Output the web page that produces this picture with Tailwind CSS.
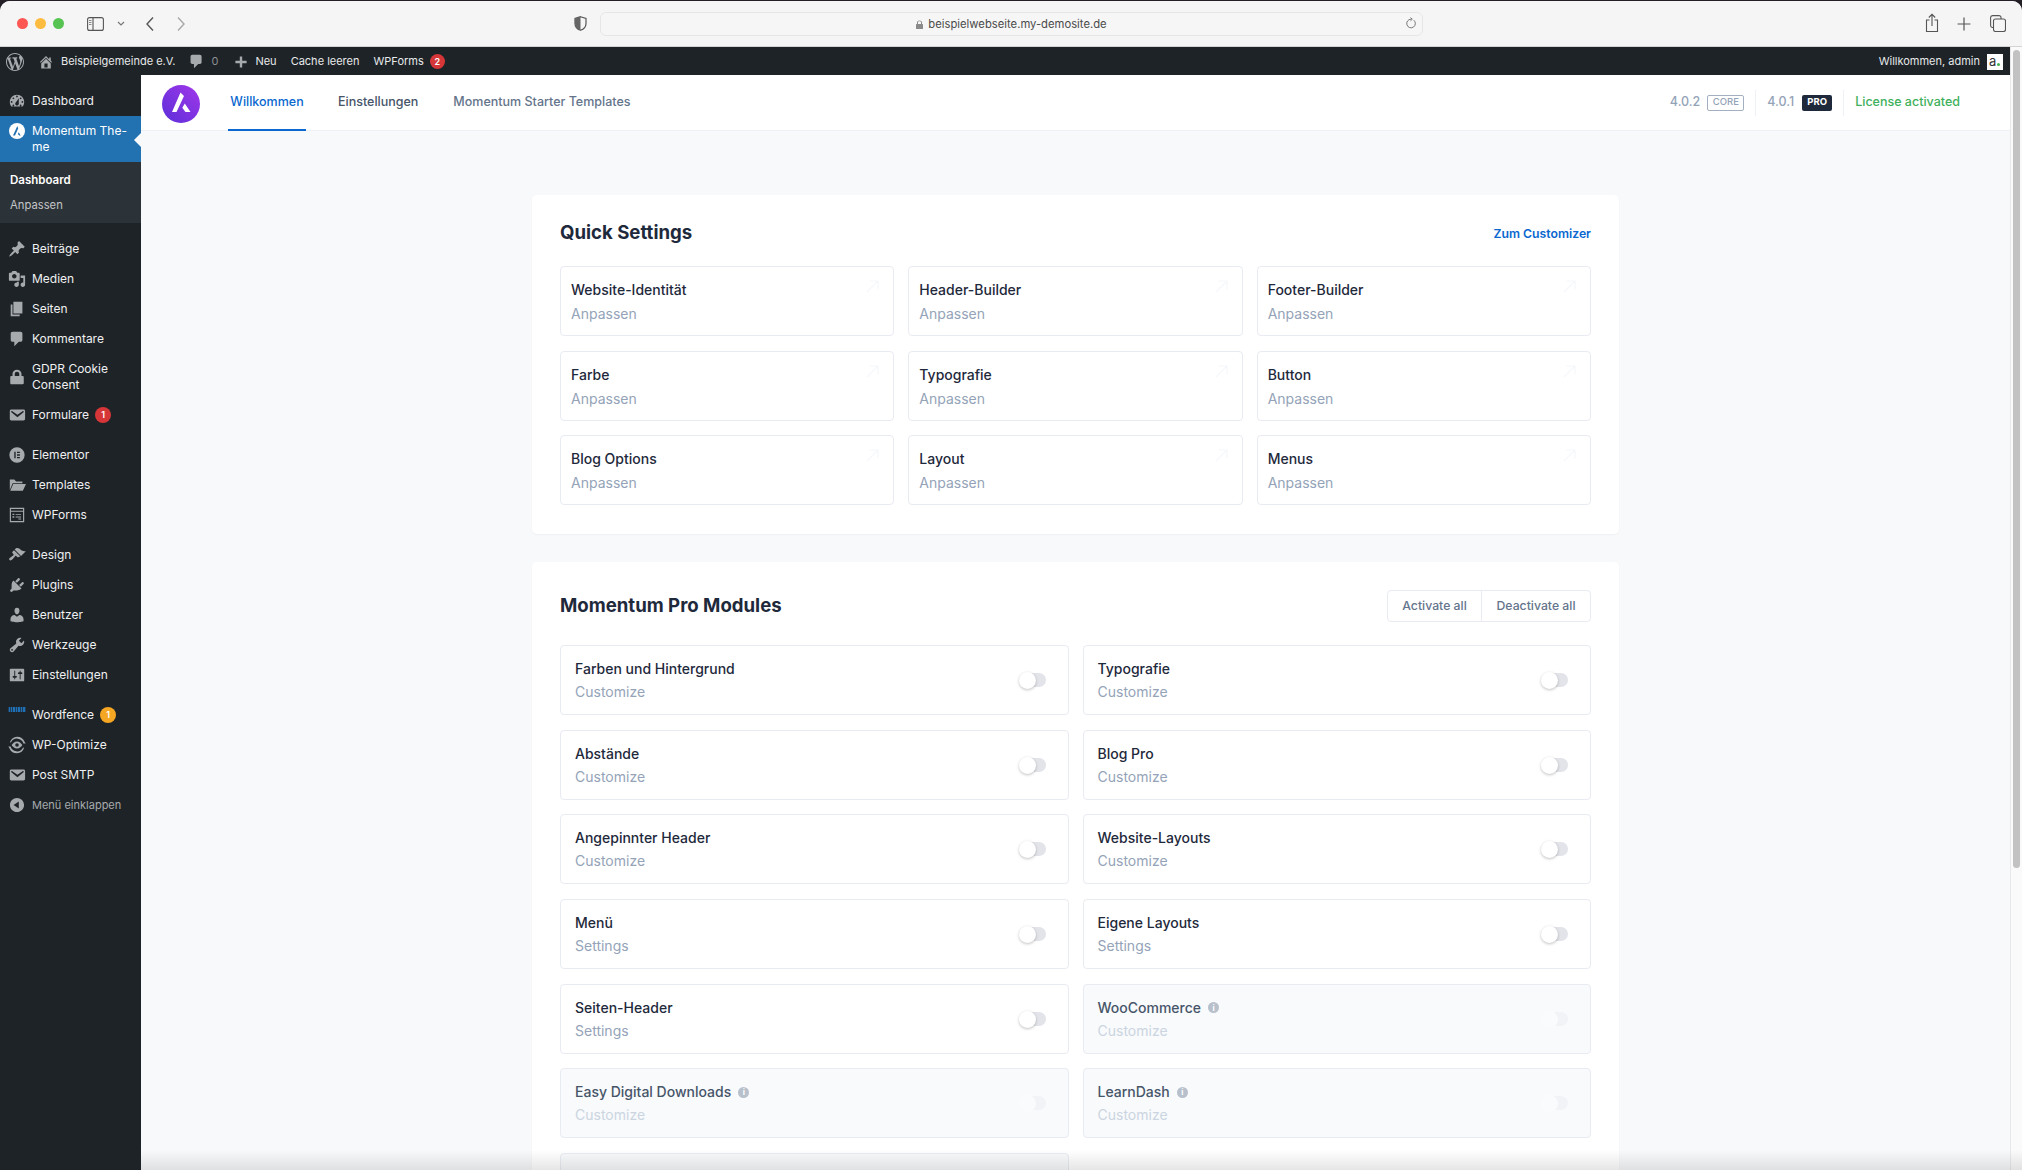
<!DOCTYPE html>
<html lang="de">
<head>
  <meta charset="UTF-8">
  <title>Momentum Theme - Beispielgemeinde e.V.</title>
  <script src="https://cdn.jsdelivr.net/npm/@tailwindcss/browser@4"></script>
</head>
<body class="bg-[#241f26] h-screen overflow-hidden font-['Inter',sans-serif] pt-px">
<div class="relative h-[1169px] flex flex-col rounded-t-[10px] overflow-hidden bg-[#f8f9fb]">

  <!-- Browser-Leiste -->
  <div class="h-[46px] shrink-0 bg-[#f5f5f5] border-b border-[#d4d4d4] flex items-center relative">
    <div class="flex items-center gap-[7px] pl-[17px]">
      <span class="w-[11px] h-[11px] rounded-full bg-[#fc5753]"></span>
      <span class="w-[11px] h-[11px] rounded-full bg-[#fdbc40]"></span>
      <span class="w-[11px] h-[11px] rounded-full bg-[#57c353]"></span>
    </div>
    <svg class="ml-[23px]" width="17" height="14" viewBox="0 0 17 14" fill="none" stroke="#555" stroke-width="1.1"><rect x="0.6" y="0.6" width="15.8" height="12.8" rx="2"/><path d="M6 1v12"/><path d="M2 3.5h2.5M2 5.5h2.5M2 7.5h2.5" stroke="#888"/></svg>
    <svg class="ml-[13px]" width="8" height="6" viewBox="0 0 8 6" fill="none" stroke="#777" stroke-width="1.2"><path d="M1 1l3 3 3-3"/></svg>
    <svg class="ml-[20px]" width="10" height="16" viewBox="0 0 10 16" fill="none" stroke="#555" stroke-width="1.4"><path d="M8 1.5L2 8l6 6.5"/></svg>
    <svg class="ml-[21px]" width="10" height="16" viewBox="0 0 10 16" fill="none" stroke="#a8a8a8" stroke-width="1.4"><path d="M2 1.5L8 8l-6 6.5"/></svg>
    <svg class="ml-[388px]" width="13" height="15" viewBox="0 0 13 15"><path d="M6.5.7L12 2.4v5c0 3.4-2.4 5.7-5.5 6.9C3.4 13.100 1 10.800 1 7.400v-5z" fill="none" stroke="#555" stroke-width="1.2"/><path d="M6.500.7V14.300C3.400 13.100 1 10.800 1 7.400v-5z" fill="#666"/></svg>
    <div class="ml-[13px] w-[823px] h-[24px] rounded-[6px] border border-[#e6e6e6] bg-[#f6f6f6] flex items-center justify-center relative text-[11.25px] text-[#4a4a4a] pt-px">
      <svg class="mr-[5px]" width="7" height="9" viewBox="0 0 7 9" fill="#8a8a8a"><path d="M1 4V2.600C1 1.300 2.100.4 3.500.4S6 1.300 6 2.600V4h.4c.3 0 .6.300.6.600v3.800c0 .3-.3.600-.6.600H.6C.3 9 0 8.700 0 8.400V4.600C0 4.300.3 4 .6 4zm1 0h3V2.600C5 1.800 4.400 1.300 3.500 1.300S2 1.800 2 2.600z"/></svg>
      <span>beispielwebseite.my-demosite.de</span>
      <svg class="absolute right-[5px] top-[4px]" width="12" height="13" viewBox="0 0 12 13" fill="none" stroke="#777" stroke-width="1"><path d="M8.800 3.200A4.300 4.300 0 1 1 6 2.200"/><path d="M5.500.6L7.300 2.200 5.500 3.800"/></svg>
    </div>
    <svg class="absolute left-[1925px] top-[12px]" width="14" height="20" viewBox="0 0 14 20" fill="none" stroke="#555" stroke-width="1.1"><path d="M4.500 7H1.500v11.500h11V7h-3"/><path d="M7 13V1.500M3.800 4.500L7 1.300l3.200 3.200"/></svg>
    <svg class="absolute left-[1957px] top-[16px]" width="14" height="14" viewBox="0 0 14 14" stroke="#555" stroke-width="1.2"><path d="M7 .6v12.800M.6 7h12.800"/></svg>
    <svg class="absolute left-[1990px] top-[14px]" width="16" height="17" viewBox="0 0 16 17" fill="none" stroke="#555" stroke-width="1.1"><rect x="3.500" y="4" width="12" height="12.500" rx="2"/><path d="M3 12.500H2.500A2 2 0 0 1 .6 10.500V2.600A2 2 0 0 1 2.500.6h6.500a2 2 0 0 1 2 2V4"/></svg>
  </div>

  <div class="flex-1 flex min-h-0">
    <div class="flex-1 flex flex-col min-w-0">

      <!-- Admin-Leiste -->
      <div class="h-[28px] shrink-0 bg-[#1d2327] flex items-center text-[11px] text-[#e8e9ea] pt-px">
        <svg class="ml-[6px]" width="18" height="18" viewBox="0 0 20 20" fill="#a7aaad"><path d="M20 10c0-5.510-4.490-10-10-10C4.480 0 0 4.490 0 10c0 5.520 4.480 10 10 10 5.510 0 10-4.480 10-10zM7.780 15.370L4.370 6.220c.55-.02 1.170-.08 1.170-.08.5-.06.44-1.130-.06-1.110 0 0-1.450.11-2.370.11-.18 0-.37 0-.58-.01C4.120 2.690 6.870 1.110 10 1.110c2.330 0 4.450.87 6.050 2.340-.68-.11-1.650.39-1.650 1.580 0 .74.45 1.360.9 2.100.35.61.55 1.360.55 2.460 0 1.490-1.400 5-1.400 5l-3.030-8.370c.54-.02.82-.17.82-.17.5-.05.44-1.250-.06-1.220 0 0-1.440.12-2.380.12-.87 0-2.330-.12-2.330-.12-.5-.03-.56 1.200-.06 1.220l.92.08 1.260 3.410zM17.410 10c.24-.64.74-1.870.43-4.250.7 1.290 1.050 2.710 1.050 4.250 0 3.290-1.730 6.240-4.400 7.780.97-2.590 1.940-5.200 2.920-7.780zM6.100 18.090C3.120 16.650 1.110 13.530 1.110 10c0-1.300.23-2.480.72-3.590C3.250 10.300 4.670 14.200 6.100 18.090zm4.030-6.630l2.580 6.980c-.86.29-1.760.45-2.710.45-.79 0-1.570-.11-2.290-.33.81-2.380 1.620-4.740 2.420-7.100z"/></svg>
        <svg class="ml-[14px]" width="16" height="16" viewBox="0 0 20 20" fill="#a7aaad"><path d="M16 8.500l1.530 1.530-1.060 1.060L10 4.620l-6.470 6.470-1.060-1.060L10 2.500l4 4v-2h2v4zm-6-2.460l6 5.990V18H4v-5.970zM12 17v-5H8v5h4z"/></svg>
        <span class="ml-[7px]">Beispielgemeinde e.V.</span>
        <svg class="ml-[13px]" width="17" height="17" viewBox="0 0 20 20" fill="#a7aaad"><path d="M5 2h9c1.100 0 2 .9 2 2v7c0 1.100-.9 2-2 2h-2l-5 5v-5H5c-1.100 0-2-.9-2-2V4c0-1.100.9-2 2-2z"/></svg>
        <span class="ml-[6px] text-[#8c8f94]">0</span>
        <svg class="ml-[15px]" width="16" height="16" viewBox="0 0 20 20" fill="#a7aaad"><path d="M17 8.500v3h-5.500V17h-3v-5.500H3v-3h5.500V3h3v5.500z"/></svg>
        <span class="ml-[6px]">Neu</span>
        <span class="ml-[14px]">Cache leeren</span>
        <span class="ml-[14px]">WPForms</span>
        <span class="ml-[6px] w-[15px] h-[15px] rounded-full bg-[#d63638] text-white text-[9px] font-semibold flex items-center justify-center">2</span>
        <span class="ml-auto">Willkommen, admin</span>
        <span class="ml-[7px] mr-[7px] w-[16px] h-[16px] bg-white text-[#333] text-[13px] leading-[15px] flex items-baseline pl-[2px]">a<i class="w-[3px] h-[3px] rounded-full bg-[#46b450] ml-[1px]"></i></span>
      </div>

      <div class="flex-1 flex min-h-0">

        <!-- Seitenleiste -->
        <aside class="w-[141px] shrink-0 bg-[#1d2327] text-[12px] text-[#f0f0f1] pt-[11px]">
          <div id="menu-top"></div>
          <div class="relative h-[46px] bg-[#2271b1] text-white flex">
            <span class="w-[32px] flex justify-center pt-[7px] pl-px">
              <svg width="16" height="16" viewBox="0 0 16 16"><circle cx="8" cy="8" r="8" fill="#fff"/><path d="M8.300 3L4 12.500h2L9.200 5.500zM9.700 9.200l2 3.300H10.200L8.900 11z" fill="#2271b1"/></svg>
            </span>
            <span class="leading-[16px] pt-[7px] w-[104px]">Momentum The-<br>me</span>
            <i class="absolute right-0 top-[17px] w-0 h-0 border-y-[7px] border-y-transparent border-r-[7px] border-r-[#f8f9fb]"></i>
          </div>
          <div class="h-[61px] bg-[#2c3338] pl-[10px] pt-[9px]">
            <div class="h-[25px] leading-[18px] font-semibold text-white text-[11.5px]">Dashboard</div>
            <div class="leading-[18px] text-[#c3c4c7] text-[11.25px]">Anpassen</div>
          </div>
          <div id="menu-main" class="pt-[11px]"></div>
        </aside>

        <!-- Inhalt -->
        <main class="flex-1 min-w-0 overflow-hidden">
          <header class="h-[56px] bg-white border-b border-[#eef1f5] flex items-stretch pl-[21px] pr-[50px] text-[12.5px]">
            <svg class="mt-[10px]" width="38" height="38" viewBox="0 0 38 38"><defs><linearGradient id="lg" x1="0" y1="1" x2="1" y2="0"><stop offset="0" stop-color="#5b2fd8"/><stop offset="1" stop-color="#a137ea"/></linearGradient></defs><circle cx="19" cy="19" r="19" fill="url(#lg)"/><path d="M18.500 7.500L10 27h4.500L22 11zM22.800 18.500L28.500 27h-5l-3.200-4.300z" fill="#fff"/></svg>
            <nav class="flex ml-[28px] font-medium">
              <a class="w-[78px] text-center pt-[18px] text-[#0a68d0] border-b-2 border-[#0a68d0] -mb-px">Willkommen</a>
              <a class="ml-[32px] pt-[18px] text-[#475569]">Einstellungen</a>
              <a class="ml-[35px] pt-[18px] text-[#64748b]">Momentum Starter Templates</a>
            </nav>
            <div class="ml-auto flex items-center font-medium">
              <span class="text-[#94a3b8]">4.0.2</span>
              <span class="ml-[7px] w-[37px] h-[16px] rounded-[2px] border border-[#a3b0c2] text-[#94a3b8] text-[9.5px] flex items-center justify-center">CORE</span>
              <i class="ml-[11px] w-px h-[26px] bg-[#eef1f5]"></i>
              <span class="ml-[11px] text-[#94a3b8]">4.0.1</span>
              <span class="ml-[8px] w-[30px] h-[16px] rounded-[2px] bg-[#1e293b] text-white text-[9.5px] font-bold flex items-center justify-center">PRO</span>
              <i class="ml-[11px] w-px h-[26px] bg-[#eef1f5]"></i>
              <span class="ml-[11px] text-[#3eb05c]">License activated</span>
            </div>
          </header>

          <div class="w-[1087px] mx-auto pt-[64px]">
            <section class="h-[339px] bg-white rounded-[5px] shadow-[0_1px_2px_rgba(15,23,42,0.04)] px-[28px] pt-[24px]">
              <div class="flex items-center justify-between h-[28px]">
                <h2 class="text-[18.6px] font-bold text-[#1e293b]">Quick Settings</h2>
                <a class="text-[12.25px] font-semibold text-[#0a68d0] pt-[2px]">Zum Customizer</a>
              </div>
              <div id="quick" class="mt-[19px] grid grid-cols-3 gap-x-[14px] gap-y-[14.670px]"></div>
            </section>

            <section class="mt-[28px] bg-white rounded-[5px] shadow-[0_1px_2px_rgba(15,23,42,0.04)] px-[28px] pt-[28px] pb-[40px]">
              <div class="flex items-center justify-between h-[32px]">
                <h2 class="text-[18.6px] font-bold text-[#1e293b]">Momentum Pro Modules</h2>
                <div class="flex h-[32px] rounded-[4px] border border-[#e8ebf1] text-[12.25px] font-medium text-[#64748b]">
                  <span class="w-[94px] flex items-center justify-center border-r border-[#e8ebf1]">Activate all</span>
                  <span class="w-[108px] flex items-center justify-center">Deactivate all</span>
                </div>
              </div>
              <div id="modules" class="mt-[23px] grid grid-cols-2 gap-x-[14px] gap-y-[14.670px]"></div>
            </section>
          </div>
        </main>
      </div>
    </div>

    <!-- Scrollbalken -->
    <div class="w-[12px] shrink-0 bg-[#fafafa] border-l border-[#e8e8e8] pt-[3px] pl-[2px]">
      <div class="w-[7px] h-[818px] rounded-full bg-[#c2c2c2]"></div>
    </div>
  </div>

  <!-- Fensterschatten unten -->
  <div class="pointer-events-none absolute left-[141px] right-0 bottom-0 h-[20px] bg-gradient-to-b from-transparent to-black/10"></div>
</div>

<script>
  const icons = {
    dashboard: 'M3.760 16h12.480c1.100-1.370 1.760-3.110 1.760-5 0-4.420-3.580-8-8-8s-8 3.580-8 8c0 1.890.66 3.630 1.760 5zM10 4c.55 0 1 .45 1 1s-.45 1-1 1-1-.45-1-1 .45-1 1-1zM6 6c.55 0 1 .45 1 1s-.45 1-1 1-1-.45-1-1 .45-1 1-1zm8 0c.55 0 1 .45 1 1s-.45 1-1 1-1-.45-1-1 .45-1 1-1zm-5.370 5.550L12 7v6c0 1.100-.9 2-2 2s-2-.9-2-2c0-.57.24-1.080.63-1.450zM4 10c.55 0 1 .45 1 1s-.45 1-1 1-1-.45-1-1 .45-1 1-1zm12 0c.55 0 1 .45 1 1s-.45 1-1 1-1-.45-1-1 .45-1 1-1zm-10 4c.55 0 1 .45 1 1s-.45 1-1 1-1-.45-1-1 .45-1 1-1zm8 0c.55 0 1 .45 1 1s-.45 1-1 1-1-.45-1-1 .45-1 1-1z',
    pin: 'M10.440 3.020l1.820-1.820 6.360 6.350-1.830 1.820c-1.050-.68-2.480-.57-3.410.36l-.75.75c-.92.93-1.040 2.350-.35 3.410l-1.830 1.820-2.410-2.410-2.800 2.790c-.42.42-3.380 2.710-3.800 2.290s1.860-3.390 2.280-3.810l2.790-2.790L4.100 9.360l1.830-1.820c1.050.69 2.480.57 3.400-.36l.75-.75c.93-.92 1.050-2.350.36-3.410z',
    media: 'M13 11V4c0-.55-.45-1-1-1h-1.670L9 1H5L3.670 3H2c-.55 0-1 .45-1 1v7c0 .55.45 1 1 1h10c.55 0 1-.45 1-1zM7 4.500c1.380 0 2.500 1.120 2.500 2.500S8.380 9.500 7 9.500 4.500 8.380 4.500 7 5.620 4.500 7 4.500zM14 6h5v10.500c0 1.380-1.120 2.500-2.500 2.500S14 17.880 14 16.500s1.120-2.500 2.500-2.500c.17 0 .34.02.5.05V9h-3V6zm-4 8.050V13h2v3.500c0 1.380-1.120 2.500-2.500 2.500S7 17.880 7 16.500 8.120 14 9.500 14c.17 0 .34.02.5.05z',
    page: 'M6 15V2h10v13H6zm-1 1h8v2H3V5h2v11z',
    comment: 'M5 2h9c1.100 0 2 .9 2 2v7c0 1.100-.9 2-2 2h-2l-5 5v-5H5c-1.100 0-2-.9-2-2V4c0-1.100.9-2 2-2z',
    lock: 'M15 9h1.500c.55 0 1 .45 1 1v7c0 .55-.45 1-1 1h-13c-.55 0-1-.45-1-1v-7c0-.55.45-1 1-1H5V6.500C5 4 7.200 2 10 2s5 2 5 4.500V9zm-2.500 0V6.500C12.500 5.300 11.400 4.300 10 4.300S7.500 5.300 7.500 6.500V9h5z',
    mail: 'M3.870 4h13.250C18.370 4 19 4.590 19 5.790v8.420c0 1.190-.63 1.790-1.880 1.790H3.870c-1.250 0-1.880-.6-1.880-1.790V5.790c0-1.200.63-1.790 1.880-1.790zm6.620 8.600l6.740-5.530c.24-.2.43-.66.13-1.070-.29-.41-.82-.42-1.170-.17l-5.700 3.860L4.800 5.830c-.35-.25-.88-.24-1.170.17-.3.41-.11.87.13 1.070z',
    elementor: 'M10 1.500a8.500 8.500 0 1 0 0 17 8.500 8.500 0 0 0 0-17zM7 6.300h1.500v7.400H7zm3 0h3.200v1.400H10zm0 3h3.200v1.400H10zm0 3h3.200v1.400H10z',
    folder: 'M2 4h5l2 2h7v2H5.200L2 15.500zM5.800 9H20l-3.500 7.500H2.500z',
    forms: 'M2 2h16v16H2zm1.300 1.300v2h13.400v-2zm0 3.200v10.200h13.400V6.500zM5 8.500h2v1.500H5zm3.500.3h6v1h-6zM5 11.500h2V13H5zm3.500.3h6v1h-6zm3 2.200h3v1h-3z',
    brush: 'M14.480 11.060L7.410 3.990l1.500-1.500c.5-.56 2.300-.47 3.510.32 1.210.8 1.430 1.280 2.910 2.100 1.180.64 2.450 1.260 4.450.85zm-.71.71L6.700 4.700 4.930 6.470c-.39.39-.39 1.020 0 1.410l1.060 1.060c.39.39.39 1.030 0 1.420-.6.6-1.430 1.110-2.210 1.690-.35.26-.7.53-1.010.84C1.430 13.230.76 14.700 1.650 15.600c.89.89 2.370.22 3.710-1.120.31-.31.58-.66.85-1.010.57-.78 1.080-1.610 1.690-2.210.39-.39 1.020-.39 1.410 0l1.060 1.060c.39.39 1.020.39 1.410 0z',
    plugin: 'M13.110 4.360L9.870 7.600 8 5.730l3.240-3.240c.35-.34 1.050-.2 1.560.32.52.51.66 1.210.31 1.550zm-8 1.770l.91-1.120 9.010 9.010-1.190.84c-.71.71-2.630 1.160-3.820 1.160H6.140L4.900 17.260c-.59.59-1.540.59-2.120 0-.59-.58-.59-1.530 0-2.120l1.240-1.240v-3.880c0-1.130.4-3.190 1.090-3.890zm7.260 3.970l3.240-3.240c.34-.35 1.040-.21 1.550.31.52.51.66 1.210.31 1.550l-3.240 3.250z',
    user: 'M10 9.250c-2.270 0-2.730-3.440-2.730-3.440C7 4.020 7.820 2 9.970 2c2.160 0 2.980 2.020 2.710 3.810 0 0-.41 3.440-2.680 3.440zm0 2.570L12.720 10c2.390 0 4.520 2.330 4.520 4.530v2.490s-3.650 1.130-7.240 1.130c-3.650 0-7.240-1.130-7.240-1.130v-2.490c0-2.250 1.940-4.480 4.470-4.480z',
    tools: 'M16.680 9.770c-1.340 1.340-3.300 1.670-4.950.99l-5.410 6.520c-.99.99-2.590.99-3.580 0s-.99-2.590 0-3.570l6.520-5.420c-.68-1.650-.35-3.610.99-4.950 1.280-1.280 3.120-1.620 4.720-1.060l-2.890 2.890 2.820 2.820 2.860-2.870c.53 1.580.18 3.390-1.080 4.650zM3.810 16.210c.4.39 1.040.39 1.430 0 .4-.4.4-1.040 0-1.430-.39-.4-1.030-.4-1.430 0-.39.39-.39 1.030 0 1.430z',
    settings: 'M18 16V4c0-.55-.45-1-1-1H3c-.55 0-1 .45-1 1v12c0 .55.45 1 1 1h14c.55 0 1-.45 1-1zM8 11h1c.55 0 1 .45 1 1s-.45 1-1 1H8v1.500c0 .28-.22.5-.5.5s-.5-.22-.5-.5V13H6c-.55 0-1-.45-1-1s.45-1 1-1h1V5.500c0-.28.22-.5.5-.5s.5.22.5.5V11zm5-2h-1c-.55 0-1-.45-1-1s.45-1 1-1h1V5.500c0-.28.22-.5.5-.5s.5.22.5.5V7h1c.55 0 1 .45 1 1s-.45 1-1 1h-1v5.500c0 .28-.22.5-.5.5s-.5-.22-.5-.5V9z',
    optimize: 'M10 .8a9.200 9.200 0 0 1 8.700 6.200l1 1.400-2.600-.2A7.400 7.400 0 0 0 3.400 7L2 7.300A9.200 9.200 0 0 1 10 .8zM10 19.200a9.200 9.200 0 0 1-8.700-6.200l-1-1.400 2.600.2A7.400 7.400 0 0 0 16.600 13l1.400-.3a9.200 9.200 0 0 1-8 6.500zM10 6c2.800 0 5 2.400 6 4-1 1.600-3.200 4-6 4s-5-2.400-6-4c1-1.600 3.200-4 6-4zm0 2a2 2 0 1 0 0 4 2 2 0 0 0 0-4z',
    collapse: 'M10 2.160c4.330 0 7.840 3.510 7.840 7.840s-3.510 7.840-7.840 7.840S2.160 14.330 2.160 10 5.710 2.160 10 2.160zm2 11.720V6.120L6.180 9.970z'
  };

  function menuItem(item) {
    if (item.gap) return '<div class="h-[10px]"></div>';
    const icon = item.strip
      ? '<svg class="mb-[10px]" width="18" height="6" viewBox="0 0 18 6" fill="#1f6fb5"><path d="M0 0h18v5H0z" opacity=".35"/><path d="M1 0h1v5H1zM3 0h1v5H3zM5 0h2v5H5zM8 0h1v5H8zM10 0h2v5h-2zM13 0h1v5h-1zM15 0h2v5h-2z"/></svg>'
      : `<svg width="18" height="18" viewBox="0 0 20 20" fill="#a7aaad" fill-rule="evenodd"><path d="${icons[item.icon]}"/></svg>`;
    const badge = item.badge
      ? `<span class="ml-[6px] w-[16px] h-[16px] rounded-full ${item.badgeClass} text-white text-[9px] font-semibold flex items-center justify-center">${item.badge}</span>`
      : '';
    const height = item.tall ? 'h-[46px] leading-[16px]' : 'h-[30px]';
    const colour = item.muted ? 'text-[#a7aaad]' : '';
    return `<div class="${height} ${colour} flex items-center"><span class="w-[32px] flex justify-center pl-px">${icon}</span><span class="${item.muted ? 'text-[11px]' : ''}">${item.label}</span>${badge}</div>`;
  }

  document.getElementById('menu-top').innerHTML = menuItem({ icon: 'dashboard', label: 'Dashboard' });
  document.getElementById('menu-main').innerHTML = [
    { icon: 'pin', label: 'Beiträge' },
    { icon: 'media', label: 'Medien' },
    { icon: 'page', label: 'Seiten' },
    { icon: 'comment', label: 'Kommentare' },
    { icon: 'lock', label: 'GDPR Cookie<br>Consent', tall: true },
    { icon: 'mail', label: 'Formulare', badge: '1', badgeClass: 'bg-[#d63638]' },
    { gap: true },
    { icon: 'elementor', label: 'Elementor' },
    { icon: 'folder', label: 'Templates' },
    { icon: 'forms', label: 'WPForms' },
    { gap: true },
    { icon: 'brush', label: 'Design' },
    { icon: 'plugin', label: 'Plugins' },
    { icon: 'user', label: 'Benutzer' },
    { icon: 'tools', label: 'Werkzeuge' },
    { icon: 'settings', label: 'Einstellungen' },
    { gap: true },
    { strip: true, label: 'Wordfence', badge: '1', badgeClass: 'bg-[#f5a623]' },
    { icon: 'optimize', label: 'WP-Optimize' },
    { icon: 'mail', label: 'Post SMTP' },
    { icon: 'collapse', label: 'Menü einklappen', muted: true }
  ].map(menuItem).join('');

  document.getElementById('quick').innerHTML = ['Website-Identität', 'Header-Builder', 'Footer-Builder', 'Farbe', 'Typografie', 'Button', 'Blog Options', 'Layout', 'Menus'].map(title => `
    <div class="relative h-[70px] rounded-[4px] border border-[#e8ebf1] pl-[10px] pt-[13px] text-[14px] leading-[20px]">
      <div class="font-medium text-[#1e293b]">${title}</div>
      <div class="mt-[4px] text-[#94a3b8]">Anpassen</div>
      <svg class="absolute right-[14px] top-[13px]" width="13" height="13" viewBox="0 0 13 13" fill="none" stroke="#f5f7fa" stroke-width="1.2"><path d="M1 12L12 1M3.500 1H12v8.500"/></svg>
    </div>`).join('');

  const modules = [
    ['Farben und Hintergrund', 'Customize'], ['Typografie', 'Customize'],
    ['Abstände', 'Customize'], ['Blog Pro', 'Customize'],
    ['Angepinnter Header', 'Customize'], ['Website-Layouts', 'Customize'],
    ['Menü', 'Settings'], ['Eigene Layouts', 'Settings'],
    ['Seiten-Header', 'Settings'], ['WooCommerce', 'Customize', true],
    ['Easy Digital Downloads', 'Customize', true], ['LearnDash', 'Customize', true]
  ];
  document.getElementById('modules').innerHTML = modules.map(([title, sub, off]) => `
    <div class="relative h-[70px] rounded-[4px] border border-[#e8ebf1] ${off ? 'bg-[#f8fafc]' : 'bg-white'} pl-[14px] pt-[13px] text-[14px] leading-[20px]">
      <div class="flex items-center font-medium ${off ? 'text-[#475569]' : 'text-[#1e293b]'}">${title}${off ? '<span class="ml-[7px] w-[11px] h-[11px] rounded-full bg-[#b8c0cc] text-white text-[8px] font-bold flex items-center justify-center">i</span>' : ''}</div>
      <div class="mt-[3px] ${off ? 'text-[#cbd5e1]' : 'text-[#94a3b8]'}">${sub}</div>
      <div class="absolute right-[22px] top-[27px] w-[26px] h-[14px] rounded-full ${off ? 'bg-[#f1f3f6]' : 'bg-[#e2e4e9]'}"></div>
      <div class="absolute right-[32px] top-[26px] w-[17px] h-[17px] rounded-full ${off ? 'bg-[#fafbfc]' : 'bg-white shadow-[0_1px_3px_rgba(0,0,0,0.25)]'}"></div>
    </div>`).join('') + '<div class="h-[70px] rounded-[4px] border border-[#e8ebf1] bg-[#f8fafc]"></div>';
</script>
</body>
</html>
